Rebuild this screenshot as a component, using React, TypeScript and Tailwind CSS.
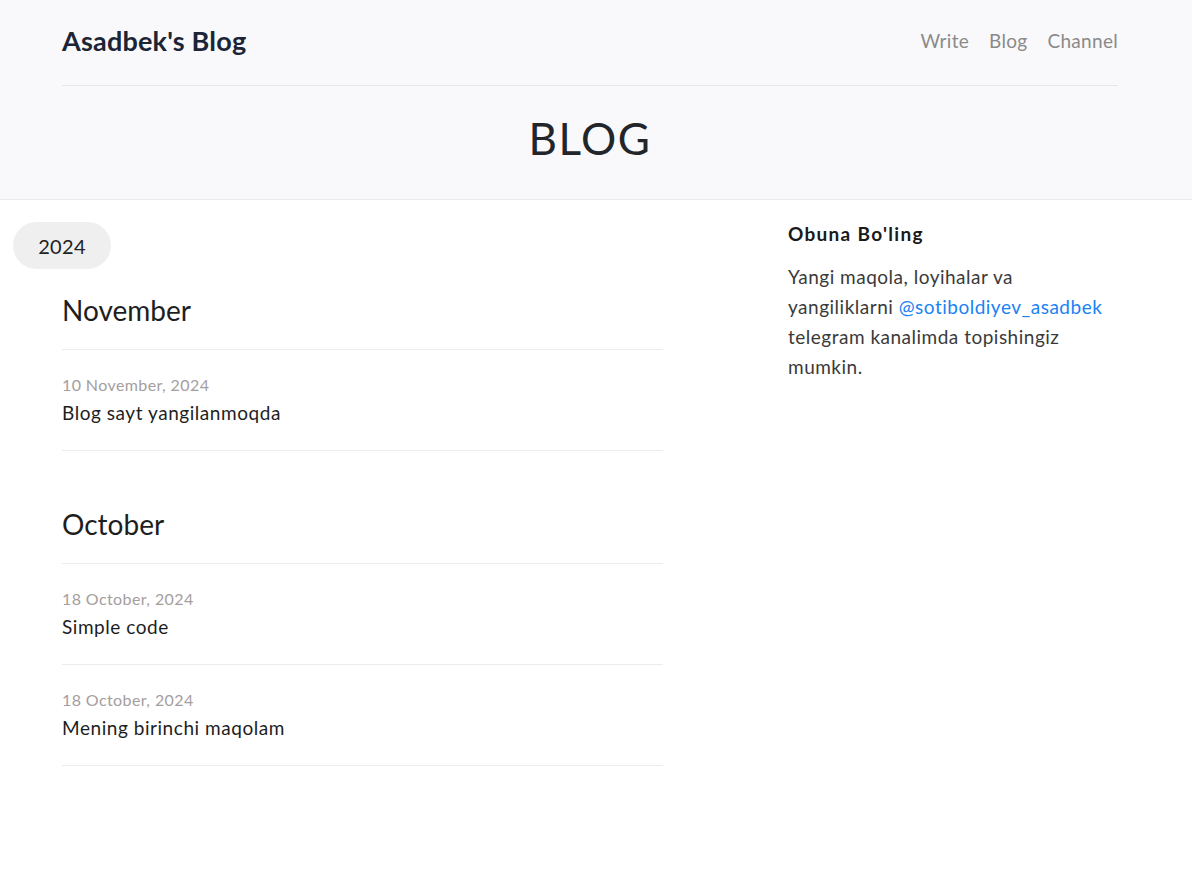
const posts = [
  {
    month: 'November',
    items: [{ date: '10 November, 2024', title: 'Blog sayt yangilanmoqda' }],
  },
  {
    month: 'October',
    items: [
      { date: '18 October, 2024', title: 'Simple code' },
      { date: '18 October, 2024', title: 'Mening birinchi maqolam' },
    ],
  },
];

export default function App() {
  return (
    <div className="min-h-screen bg-white font-['Lato','Noto_Sans',sans-serif] text-[#212121]">
      {/* Header */}
      <header className="bg-[#f9f9fb] border-b border-[#ececef]">
        <div className="pl-[62px] w-[1118px]">
          <div className="h-[86px] pb-[2px] flex items-center justify-between border-b border-[#e6e6ea]">
            <span className="text-[27px] font-bold text-[#1b2536] tracking-[0.2px]">Asadbek's Blog</span>
            <nav className="flex items-center gap-[20px] text-[19px] text-[#8a8a8a] tracking-[0.3px]">
              <a>Write</a>
              <a>Blog</a>
              <a>Channel</a>
            </nav>
          </div>
          <div className="h-[113px] pb-[10px] flex items-center justify-center">
            <h1 className="text-[44px] tracking-[1.5px] text-[#222529] font-normal">BLOG</h1>
          </div>
        </div>
      </header>

      {/* Main */}
      <main className="pl-[62px] w-[1118px] flex gap-[125px]">
        <section className="w-[601px] pt-[22px]">
          <div className="-ml-[49px] w-[98px] h-[47px] rounded-full bg-[#efefef] flex items-center justify-center text-[20px] text-[#222] tracking-[0.3px] mb-[23px]">
            2024
          </div>
          <div className="flex flex-col gap-[55px]">
            {posts.map((group) => (
              <div key={group.month}>
                <h2 className="text-[28px] leading-[36px] pb-[21px] border-b border-[#ececec] text-[#1e1e1e]">
                  {group.month}
                </h2>
                {group.items.map((p, i) => (
                  <div key={i} className="pt-[23px] pb-[23px] border-b border-[#ececec]">
                    <div className="text-[16px] leading-[24px] text-[#a49e9e] tracking-[0.4px]">{p.date}</div>
                    <div className="mt-[2px] text-[19px] leading-[28px] text-[#1e1e1e] tracking-[0.55px]">{p.title}</div>
                  </div>
                ))}
              </div>
            ))}
          </div>
        </section>

        <aside className="w-[330px] pt-[20px]">
          <h3 className="text-[19px] font-bold tracking-[1.3px] text-[#1a1a1a] leading-[28px]">Obuna Bo'ling</h3>
          <p className="mt-[14px] text-[19px] leading-[30px] text-[#3a3a3a] tracking-[0.5px]">
            Yangi maqola, loyihalar va yangiliklarni{' '}
            <a className="text-[#1a82f5]">@sotiboldiyev_asadbek</a> telegram kanalimda topishingiz mumkin.
          </p>
        </aside>
      </main>
    </div>
  );
}
